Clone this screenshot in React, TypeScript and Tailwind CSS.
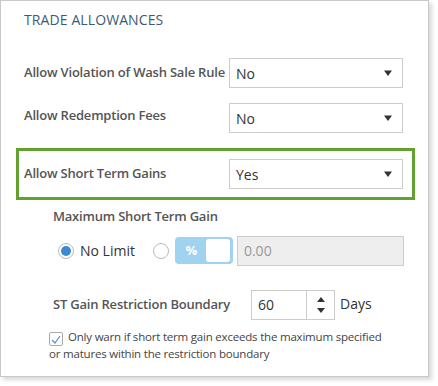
import React from "react";

const Caret = () => (
  <svg width="8" height="6" viewBox="0 0 8 6" className="shrink-0">
    <path d="M0 0.5 L8 0.5 L4 6 Z" fill="#333" />
  </svg>
);

const Select = ({ value }: { value: string }) => (
  <div className="w-[174px] h-[30px] border border-[#cccccc] bg-white flex items-center justify-between pl-[6px] pr-[10px]">
    <span className="text-[14px] text-[#333]">{value}</span>
    <Caret />
  </div>
);

export default function App() {
  return (
    <div
      className="w-[438px] h-[386px] bg-white"
      style={{ fontFamily: '"Open Sans", "Noto Sans", sans-serif' }}
    >
      <div className="w-[429px] h-[377px] border border-[#c8c8c8] shadow-[3px_3px_4px_rgba(0,0,0,0.15)] flex flex-col">
        <div className="pl-[23px] pt-[8px] text-[14px] tracking-[0.1px] text-[#3d5a78]">TRADE ALLOWANCES</div>

        <div className="flex items-center mt-[28px] h-[30px]">
          <div className="pl-[23px] w-[228px] text-[13px] font-semibold text-[#555] tracking-[-0.2px]">Allow Violation of Wash Sale Rule</div>
          <Select value="No" />
        </div>

        <div className="flex items-center mt-[15px] h-[30px]">
          <div className="pl-[23px] w-[228px] text-[13px] font-semibold text-[#555] tracking-[-0.2px] -mt-[4px]">Allow Redemption Fees</div>
          <Select value="No" />
        </div>

        <div className="ml-[15px] mt-[15px] w-[399px] h-[52px] border-[3px] border-[#62a12d] flex items-center">
          <div className="pl-[5px] w-[210px] text-[13px] font-semibold text-[#555] tracking-[-0.2px]">Allow Short Term Gains</div>
          <Select value="Yes" />
        </div>

        <div className="pl-[52px] mt-[7px] text-[13px] font-semibold text-[#555] tracking-[-0.2px]">Maximum Short Term Gain</div>

        <div className="flex items-center mt-[9px] h-[30px] pl-[57px]">
          <div className="w-[16px] h-[16px] rounded-full border border-[#bbb] bg-white flex items-center justify-center">
            <div className="w-[10px] h-[10px] rounded-full bg-[#3c8bd0]" />
          </div>
          <span className="ml-[6px] text-[14px] text-[#333]">No Limit</span>
          <div className="ml-[18px] w-[16px] h-[16px] rounded-full border border-[#bbb] bg-white" />
          <div className="ml-[6px] w-[58px] h-[27px] rounded-[4px] bg-[#9fd3ef] flex items-center p-[2px]">
            <span className="w-[29px] text-center text-white font-bold text-[13px]">%</span>
            <div className="w-[24px] h-[23px] bg-white rounded-[3px]" />
          </div>
          <div className="ml-[4px] w-[167px] h-[30px] border border-[#ccc] bg-[#eeeeee] flex items-center pl-[6px] text-[14px] text-[#999]">0.00</div>
        </div>

        <div className="flex items-center mt-[24px] h-[30px] pl-[52px]">
          <span className="w-[198px] text-[13px] font-semibold text-[#555] tracking-[-0.2px]">ST Gain Restriction Boundary</span>
          <div className="w-[84px] h-[30px] border border-[#ccc] flex">
            <div className="flex-1 flex items-center pl-[6px] text-[14px] text-[#333]">60</div>
            <div className="w-[28px] border-l border-[#ccc] flex flex-col items-center justify-center gap-[6px]">
              <svg width="8" height="5" viewBox="0 0 8 5"><path d="M0 5 L8 5 L4 0 Z" fill="#333" /></svg>
              <svg width="8" height="5" viewBox="0 0 8 5"><path d="M0 0 L8 0 L4 5 Z" fill="#333" /></svg>
            </div>
          </div>
          <span className="ml-[5px] -mt-[2px] text-[14px] text-[#333]">Days</span>
        </div>

        <div className="pl-[48px] pr-[36px] mt-[9px] text-[11.5px] leading-[16px] tracking-[-0.2px] text-[#444]">
          <span className="inline-flex align-[-3px] w-[14px] h-[14px] border border-[#aaa] rounded-[2px] items-center justify-center mr-[5px]">
            <svg width="10" height="9" viewBox="0 0 10 9"><path d="M1 5 L4 8 L9 1" stroke="#5b8fc7" strokeWidth="1.2" fill="none" /></svg>
          </span>
          Only warn if short term gain exceeds the maximum specified or matures within the restriction boundary
        </div>
      </div>
    </div>
  );
}
